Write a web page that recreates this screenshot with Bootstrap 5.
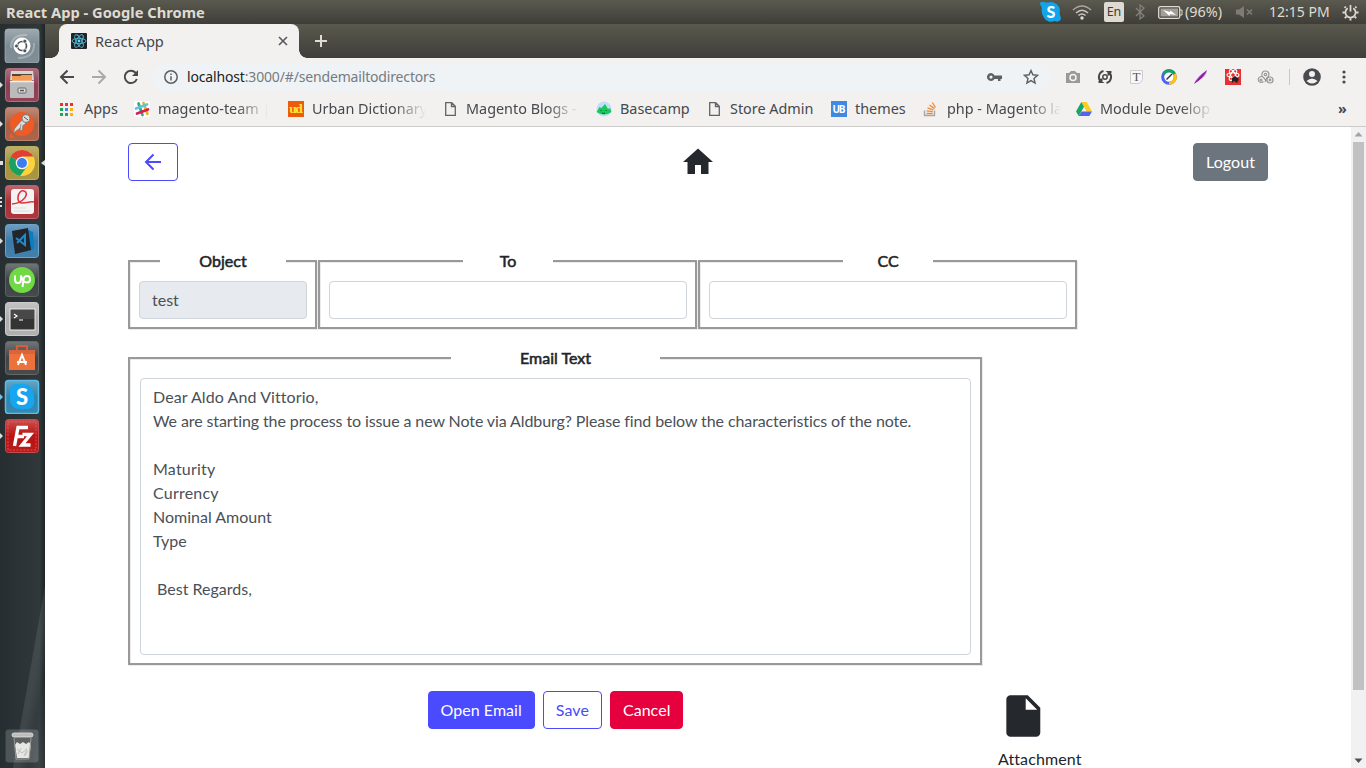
<!DOCTYPE html>
<html lang="en">
<head>
<meta charset="utf-8">
<meta name="viewport" content="width=device-width, initial-scale=1">
<title>React App</title>
<link href="https://cdn.jsdelivr.net/npm/bootstrap@5.3.0/dist/css/bootstrap.min.css" rel="stylesheet">
<script src="https://cdn.jsdelivr.net/npm/bootstrap@5.3.0/dist/js/bootstrap.bundle.min.js"></script>
<style>
body{height:768px;font-family:Lato,sans-serif;font-size:16px;color:#212529;line-height:24px}
svg{display:block;flex:none}
.ui{font-family:"Noto Sans","Open Sans",sans-serif;font-size:14px;letter-spacing:0;white-space:nowrap}
.panel{height:24px;background:linear-gradient(#5b5a50,#3e3d38);color:#dfdbd2;line-height:24px}
.panel b{font-size:14.7px;padding-left:6px}
.pct{font-size:14.4px}
.tabname{font-size:14.6px}
.url{letter-spacing:-.16px}
.indicators{display:grid;grid-template-columns:32px 32px 31px 23px 27px 51px 33px 73px 24px;align-items:center;height:24px}
.lang{width:20px;height:20px;background:#dfdbd2;color:#3c3b37;border-radius:2px;font-size:12.5px;line-height:20px;text-align:center}
.launcher{width:45px;background:linear-gradient(100deg,transparent 0 62%,#ffffff17 63% 68%,#ffffff05 80%,#ffffff14) 0 100%/45px 230px no-repeat,linear-gradient(90deg,#262e31,#30383b 88%,#1d2426)}
.browser{min-width:0}
.tabs{height:34px;background:linear-gradient(#5a594e,#3f3e39);padding-left:14px}
.tab-open{width:240px;background:#f2f1f0;border-radius:8px 8px 0 0;padding-left:12px;padding-right:11px;color:#45484c;position:relative}
.tab-open::before,.tab-open::after{content:"";position:absolute;bottom:0;width:8px;height:8px}
.tab-open::before{left:-8px;background:radial-gradient(circle at 0 0,transparent 7.5px,#f2f1f0 8px)}
.tab-open::after{right:-8px;background:radial-gradient(circle at 100% 0,transparent 7.5px,#f2f1f0 8px)}
.toolbar{height:36px;background:#f2f1f0;padding:2px 0 0 14px;gap:16px}
.omnibox{width:899px;height:28px;margin-left:-3px;margin-right:-16px;border-radius:14px;background:#eff3f6;padding-left:12px;color:#777b80;flex:none}
.omnibox span{color:#222}
.url{margin-left:9px}
.keyicon{margin-right:21px}.staricon{margin-right:12px}
.exts{display:grid;grid-template-columns:46px 32px 32px 32px 32px 32px 32px 14px 39px 8px;align-items:center}
.cam{margin-left:14px}
.bookmarks{height:33px;background:#f2f1f0;border-bottom:1px solid #cccbca;padding:0 0 2px 15px;display:grid;grid-template-columns:74px 154px 156px 152px 112px 123px 92px 153px 262px auto;align-items:center;color:#45484c;font-size:14.4px}
.bm{display:flex;align-items:center;height:30px}
.bm svg{width:16px;height:16px;margin-right:8px}
.bm .doc{margin-left:-2px}
.fade-end{-webkit-mask-image:linear-gradient(90deg,#000 calc(100% - 32px),transparent)}
.w107{width:110px}.w113{width:114px}.w111{width:113px}
.page{padding:16px 83px 0;background:#fff;overflow:hidden;min-width:0}
.page .btn{--bs-btn-padding-x:12px;--bs-btn-border-radius:4px;height:38px;letter-spacing:.05px}
.blue-outline{--bs-btn-color:#4a4aff;--bs-btn-border-color:#4a4aff}
.blue-fill{--bs-btn-color:#fff;--bs-btn-bg:#4a4aff;--bs-btn-border-color:#4a4aff}
.red-fill{--bs-btn-color:#fff;--bs-btn-bg:#e6003e;--bs-btn-border-color:#e6003e}
.backbtn{width:50px}
.home{margin-left:25px}
.group{border:2px solid #999;box-shadow:1px 1px #ebebeb,inset 1px 1px #ebebeb;margin-right:1px;padding:8px 8px 8px 9px}
.group legend{float:none;margin:0 auto;background:#fff;font-size:16px;line-height:24px;height:24px;padding:0;text-align:center;-webkit-text-stroke:.55px #212529}
.lg-a{width:126px}.lg-b{width:90px}.lg-c{width:209px}
.page .form-control{border-radius:4px;border-color:#ced4da;color:#495057;padding:6px 12px}
.page .form-control:disabled{background:#e7ebef}
.first-row{margin-top:68px}
.second-row{margin-top:17px}
.mail{padding-left:10px;padding-right:9px}
.mail .message{height:277px;white-space:pre}
.message div{height:24px}
.looser{letter-spacing:.09px}.wide{letter-spacing:.22px}.tight{letter-spacing:-.1px}
.actions{margin-top:26px}
.attach{padding-left:15px;height:425px}
.attach div{margin-top:6px;letter-spacing:.1px}
.scroller{width:15px;background:#f1f1f1;flex:none}
.thumb{width:11px;height:548px;background:#c1c1c1}
</style>
</head>
<body class="d-flex flex-column overflow-hidden">
<header class="panel ui d-flex justify-content-between">
  <b>React App - Google Chrome</b>
  <div class="indicators">
    <svg width="22" height="22" viewBox="0 0 22 22"><path d="M0 3Q0 0 4 1Q7 2 10 1Q18 1 20 9Q19 13 21 17Q20 22 15 20Q7 23 3 15Q1 11 2 7Z" fill="#11a5ea"/><text x="11" y="16.500" font-family="Lato" font-weight="900" font-size="16" fill="#fff" text-anchor="middle">S</text></svg>
    <svg width="20" height="16" viewBox="0 0 20 16" fill="none" stroke="#c9c6be" stroke-width="1.600"><path d="M1 6Q10-2 19 6" stroke="#aaa79f"/><path d="M4 9Q10 3.500 16 9M6.500 11.500Q10 8.500 13.500 11.500"/><circle cx="10" cy="14" r="1.700" fill="#dfdbd2" stroke="none"/></svg>
    <div class="lang">En</div>
    <svg width="11" height="16" viewBox="0 0 11 16" fill="none" stroke="#85837b" stroke-width="1.200"><path d="M1 4l8 8-4 3V1l4 3-8 8"/></svg>
    <svg width="25" height="13" viewBox="0 0 25 13"><rect x=".7" y=".7" width="21" height="11.600" rx="1.500" fill="none" stroke="#dfdbd2" stroke-width="1.300"/><rect x="2.500" y="2.500" width="17.500" height="8" fill="#a19f98"/><path d="M22 4h2v5h-2" fill="none" stroke="#dfdbd2"/><path d="M5 4l7 2 .5-1.500L18 9l-6-1-.5 2z" fill="#fff"/></svg>
    <span class="pct">(96%)</span>
    <svg width="18" height="14" viewBox="0 0 18 14"><path d="M0 4.500h3L8 1v12L3 9.500H0z" fill="#7d7b74"/><path d="M11 4.500l5 5m0-5l-5 5" stroke="#7d7b74" stroke-width="1.700"/></svg>
    <span class="clock">12:15 PM</span>
    <svg width="17" height="17" viewBox="0 0 18 18" fill="none" stroke="#dfdbd2"><path d="M6 4.500a5.400 5.400 0 1 0 6 0" stroke-width="1.800"/><path d="M9 1v7" stroke-width="1.800"/><path d="M4 4L2.700 2.700M14 4l1.300-1.300M3 9H.5m14.500 0h2.500M4.500 13.500L3 15m10.500-1.500L15 15M9 15v2.500" stroke-width="2"/></svg>
  </div>
</header>

<div class="d-flex flex-grow-1 overflow-hidden">
<aside class="launcher d-flex flex-column justify-content-between flex-shrink-0">
  <div>
  <svg width="45" height="39"><defs><linearGradient id="sh" x2="0" y2="1"><stop stop-color="#fff" stop-opacity=".3"/><stop offset=".5" stop-color="#fff" stop-opacity=".04"/><stop offset="1" stop-color="#fff" stop-opacity=".08"/></linearGradient></defs><rect x="5" y="5" width="34" height="34" rx="3" fill="#76868e"/><path d="M11 24Q11 10 27 11M34 19Q35 34 18 34" stroke="#9ba7ad" stroke-width="2" fill="none"/><rect x="5" y="5" width="34" height="34" rx="3" fill="url(#sh)" stroke="#aab2b6" stroke-width=".7"/><circle cx="22" cy="22" r="8.500" fill="#fff"/><circle cx="22" cy="22" r="4.500" fill="none" stroke="#4c555a" stroke-width="1.700"/><g fill="#4c555a" stroke="#fff" stroke-width=".8"><circle cx="16.500" cy="22" r="2"/><circle cx="24.800" cy="17.200" r="2"/><circle cx="24.800" cy="26.800" r="2"/></g></svg>
  <svg width="45" height="39"><rect x="5.500" y="5.500" width="33" height="33" rx="3" fill="#8a344a"/><rect x="5.500" y="5.500" width="33" height="33" rx="3" fill="url(#sh)" stroke="#ac7180"/><path d="M11 8h22l1 9H10z" fill="#d8d5d2"/><path d="M12 11h20v7H12z" fill="#564438"/><path d="M12 13h8l2-1h10v6H12z" fill="#f39a55"/><rect x="10" y="18" width="24" height="17" rx="1" fill="#bbb"/><path d="M10 18.500h24" stroke="#f4f4f4" stroke-width="1.500"/><rect x="18" y="25" width="8" height="5" rx="1" fill="#ddd" stroke="#666"/><path d="M20 27.500h4" stroke="#555" stroke-width="1.500"/><path d="M0 19l3 3-3 3z" fill="#ddd"/></svg>
  <svg width="45" height="39"><rect x="5.500" y="5.500" width="33" height="33" rx="3" fill="#a5593c"/><rect x="5.500" y="5.500" width="33" height="33" rx="3" fill="url(#sh)" stroke="#bd8069"/><circle cx="22" cy="22" r="12" fill="#f15a24"/><path d="M10 31l5 5h-5z" fill="#f15a24"/><path d="M13 31l2-5 8-9 3 4-7 6z" fill="#ddd" stroke="#777" stroke-width=".7"/><path d="M21 22l-1 6 2 1 1-6" fill="#ddd" stroke="#777" stroke-width=".7"/><circle cx="26" cy="16.500" r="4" fill="#ddd" stroke="#777"/><path d="M24 15l4 3" stroke="#555"/><path d="M0 19l3 3-3 3z" fill="#ddd"/></svg>
  <svg width="45" height="39"><rect x="5.500" y="5.500" width="33" height="33" rx="3" fill="#a38e33"/><rect x="5.500" y="5.500" width="33" height="33" rx="3" fill="url(#sh)" stroke="#bfae5a"/><circle cx="22" cy="22" r="13" fill="#fdd23c"/><path d="M22 22L10.700 15.500a13 13 0 0 1 22.600 0H22z" fill="#df3f34"/><path d="M22 22L10.700 15.500a13 13 0 0 0 9.300 19.400L27.500 25z" fill="#1ba15f"/><circle cx="22" cy="22" r="6.300" fill="#f4f4f4"/><circle cx="22" cy="22" r="5" fill="#3b7ded"/><path d="M0 20h3v4H0z" fill="#ddd"/><path d="M45 19l-4 3 4 3z" fill="#ddd"/></svg>
  <svg width="45" height="39"><rect x="5.500" y="5.500" width="33" height="33" rx="3" fill="#a5262e"/><rect x="5.500" y="5.500" width="33" height="33" rx="3" fill="url(#sh)" stroke="#c16067"/><rect x="11" y="9" width="23" height="25" rx="3" fill="#f3f3f3"/><path d="M12 24C24 23 30 13 24 11s-9 12-2 12 7-2 12-1" stroke="#df3541" stroke-width="1.600" fill="none"/><path d="M14 28h12m-12 3h16" stroke="#ddd"/><path d="M0 18h2m-2 4h2m-2 4h2" stroke="#ddd" stroke-width="2"/></svg>
  <svg width="45" height="39"><rect x="5.500" y="5.500" width="33" height="33" rx="3" fill="#3375a5"/><rect x="5.500" y="5.500" width="33" height="33" rx="3" fill="url(#sh)" stroke="#6ea4c9"/><path d="M28 11l5 2 1 17-9 3z" fill="#087dc7"/><path d="M12 12l16-3 3 22-16 4z" fill="#22252a"/><path d="M16 19l9 7V16l-8 8" fill="none" stroke="#2489ca" stroke-width="2"/><path d="M0 19l3 3-3 3z" fill="#ddd"/></svg>
  <svg width="45" height="39"><rect x="5.500" y="5.500" width="33" height="33" rx="3" fill="#353c3e"/><rect x="5.500" y="5.500" width="33" height="33" rx="3" fill="url(#sh)" stroke="#5b6061"/><circle cx="22" cy="22" r="13" fill="#6fda44"/><path d="M15 17.500v4q0 3.500 3 3.500t3-3.500v-4q2 7 6 7 3 0 3-3.300t-3-3.300q-3 0-3.500 4L22.500 29" fill="none" stroke="#fff" stroke-width="2"/></svg>
  <svg width="45" height="39"><rect x="5.500" y="5.500" width="33" height="33" rx="3" fill="#aaa"/><rect x="5.500" y="5.500" width="33" height="33" rx="3" fill="url(#sh)" stroke="#ccc"/><rect x="10" y="12" width="25" height="21" fill="#343434" stroke="#eee"/><path d="M11 13h23v9H11z" fill="#fff" opacity=".1"/><path d="M14 17l3 2-3 2m5 2h4" fill="none" stroke="#fff" stroke-width="1.200"/><path d="M0 19l3 3-3 3z" fill="#ddd"/></svg>
  <svg width="45" height="39"><rect x="5.500" y="5.500" width="33" height="33" rx="3" fill="#393b3c"/><rect x="5.500" y="5.500" width="33" height="33" rx="3" fill="url(#sh)" stroke="#666"/><path d="M9 14h26v20H9z" fill="#ee713b"/><path d="M9 14h26v4H9z" fill="#d9633a"/><path d="M17 14v-4h10v4" fill="none" stroke="#d95e38" stroke-width="2"/><path d="M18 29l4-10 4 10m-9-3h10" fill="none" stroke="#fff" stroke-width="2"/></svg>
  <svg width="45" height="39"><rect x="5.500" y="5.500" width="33" height="33" rx="3" fill="#277fab"/><rect x="5.500" y="5.500" width="33" height="33" rx="3" fill="url(#sh)" stroke="#5bbce7" stroke-width="1.500"/><path d="M10 16q0-8 8-7 15-2 16 13 2 13-9 12-15 2-15-11z" fill="#16a6ef"/><text x="22" y="29.500" font-family="Lato" font-weight="900" font-size="22" fill="#fff" text-anchor="middle">S</text><path d="M0 19l3 3-3 3z" fill="#71c3e4"/></svg>
  <svg width="45" height="39"><rect x="5.500" y="5.500" width="33" height="33" rx="3" fill="#b60808"/><rect x="5.500" y="5.500" width="33" height="33" rx="3" fill="url(#sh)" stroke="#c64b4b"/><rect x="8" y="8" width="28" height="28" fill="none" stroke="#e46a6a" stroke-width=".7" stroke-dasharray="2 1.500"/><path d="M14.500 32L18 13.500H28M16 22.500h8M22.500 20.500h8L22 31h8.500" fill="none" stroke="#fff" stroke-width="3.400"/><path d="M0 19l3 3-3 3z" fill="#ddd"/></svg>
  </div>
  <svg width="45" height="44"><rect x="5.500" y="5.500" width="33" height="33" rx="3" fill="#fff" fill-opacity=".18"/><path d="M14 13l2 22h13l2-22z" fill="#5d605f"/><path d="M15 21l2-3 3 2 3-2 3 2 3-2 2 3-2 13H17z" fill="#e6e6e2"/><path d="M17 25l5 4 5-4-3 7m-6-2l3-6m4 8l3-5" stroke="#b9b9b4" stroke-width=".8" fill="none"/><rect x="12" y="9" width="21" height="4" rx="2" fill="#bbbdba" stroke="#e2e2df" stroke-width=".8"/><path d="M14 14l2 21h13l2-21" fill="none" stroke="#999"/></svg>
</aside>

<div class="browser d-flex flex-column flex-grow-1">
  <div class="tabs ui d-flex">
    <div class="tab-open d-flex align-items-center">
      <svg width="16" height="16" viewBox="0 0 16 16"><rect width="16" height="16" rx="1" fill="#20232a"/><g fill="none" stroke="#53bbd5" stroke-width=".9"><ellipse cx="8" cy="8" rx="7" ry="2.700"/><ellipse cx="8" cy="8" rx="7" ry="2.700" transform="rotate(60 8 8)"/><ellipse cx="8" cy="8" rx="7" ry="2.700" transform="rotate(120 8 8)"/></g><circle cx="8" cy="8" r="1.400" fill="#61dafb"/></svg>
      <span class="ms-2 me-auto tabname">React App</span>
      <svg width="10" height="10" viewBox="0 0 10 10"><path d="M1 1l8 8m0-8L1 9" stroke="#55585c" stroke-width="1.600"/></svg>
    </div>
    <svg class="align-self-center ms-3" width="12" height="12"><path d="M6 0v12M0 6h12" stroke="#dedcd5" stroke-width="2"/></svg>
  </div>
  <div class="toolbar ui d-flex align-items-center">
    <svg width="16" height="16" viewBox="0 0 16 16" fill="none" stroke="#47494c" stroke-width="2"><path d="M15 8H2m6.500-6.500L2 8l6.500 6.500"/></svg>
    <svg width="16" height="16" viewBox="0 0 16 16" fill="none" stroke="#aaa" stroke-width="2"><path d="M1 8h13M7.500 1.500L14 8l-6.500 6.500"/></svg>
    <svg width="16" height="16" viewBox="0 0 16 16"><path d="M13.800 10A6.200 6.200 0 1 1 12.400 3.500L14 5" fill="none" stroke="#47494c" stroke-width="2"/><path d="M15 1v6H9z" fill="#47494c"/></svg>
    <div class="omnibox d-flex align-items-center">
      <svg width="14" height="14" viewBox="0 0 14 14" fill="none" stroke="#5c5f63" stroke-width="1.500"><circle cx="7" cy="7" r="6.200"/><path d="M7 6.200v4.300M7 3.500v1.500"/></svg>
      <div class="url me-auto"><span>localhost</span>:3000/#/sendemailtodirectors</div>
      <svg class="keyicon" width="15" height="10" viewBox="0 0 15 10"><path d="M4 1a4 4 0 1 0 3.500 6H11v2h2.500V7H15V3.500H7.500A4 4 0 0 0 4 1zm0 2.500a1.600 1.600 0 1 1 0 3.200 1.600 1.600 0 0 1 0-3.200z" fill="#5c5f63" fill-rule="evenodd"/></svg>
      <svg class="staricon" width="16" height="16" viewBox="0 0 16 16"><path d="M8 1.500l1.900 4.300 4.700.5L11 9.400l1.100 4.700L8 11.600l-4.100 2.500L5 9.400 1.400 6.300l4.700-.5z" fill="none" stroke="#5c5f63" stroke-width="1.400"/></svg>
    </div>
    <div class="exts">
      <svg class="cam" width="16" height="16" viewBox="0 0 16 16"><path d="M1 4h3l2-2h4l2 2h3v10H1z" fill="#999"/><circle cx="8" cy="8.500" r="3" fill="#999" stroke="#f4f4f4" stroke-width="1.500"/></svg>
      <svg width="16" height="16" viewBox="0 0 16 16" fill="none" stroke="#474747" stroke-width="2"><path d="M6.500 2a6.200 6.200 0 0 0-2 11H1.500M9.500 14a6.200 6.200 0 0 0 2-11h3M4.500 14V9.500M11.500 2v4.500"/><circle cx="8" cy="8" r="2.200" stroke-width="1.500"/></svg>
      <svg width="16" height="16"><path d="M1.500 1.500h12v9l-3 4h-9z" fill="#f8f8f8" stroke="#ccc"/><text x="7.500" y="12" font-size="13" font-family="Liberation Serif" text-anchor="middle" fill="#555">T</text></svg>
      <svg width="16" height="16" viewBox="0 0 16 16"><circle cx="8" cy="8" r="6.300" fill="#fff" stroke="#4b62f6" stroke-width="3"/><path d="M2.500 5A6.300 6.300 0 0 1 13.500 5" fill="none" stroke="#12a45a" stroke-width="3"/><path d="M13.500 5A6.300 6.300 0 0 1 8 14.300" fill="none" stroke="#ffc20e" stroke-width="3"/><path d="M5.500 10.500L11 5" stroke="#333" stroke-width="1.500"/></svg>
      <svg width="16" height="16"><path d="M1 15Q3 8 14 1q0 7-9 10z" fill="#c6a3da"/><path d="M1 15Q5 8 14 1 11 9 1 15" fill="#8f1ba7"/></svg>
      <svg width="16" height="16"><path d="M0 0h16v16H0z" fill="#e53131"/><g fill="none" stroke="#fff" stroke-width="1.100"><ellipse cx="8" cy="6" rx="6" ry="2.300"/><ellipse cx="8" cy="6" rx="6" ry="2.300" transform="rotate(60 8 6)"/><ellipse cx="8" cy="6" rx="6" ry="2.300" transform="rotate(120 8 6)"/></g><path d="M7 9l3-2 4 3-2 4-3-2-2 2z" fill="#282020"/></svg>
      <svg width="17" height="16" viewBox="0 0 17 16" fill="none" stroke="#999" stroke-width="1.200"><path d="M5 8V5.500a3.500 3.500 0 0 1 7 0q0 2-2 3L8 13"/><circle cx="8.500" cy="5.500" r="1.200"/><path d="M6.500 12.500a3 3 0 1 1 0-4l3 3.500"/><circle cx="4" cy="11" r="1"/><circle cx="13" cy="11" r="3"/><circle cx="13" cy="11" r=".8"/></svg>
      <svg width="1" height="16"><path d="M.5 0v16" stroke="#c9c8c7"/></svg>
      <svg width="18" height="18" viewBox="0 0 18 18"><circle cx="9" cy="9" r="8.800" fill="#494b4e"/><circle cx="9" cy="6" r="3" fill="#f2f1f0"/><path d="M3.500 13q5.500-5 11 0-5.500 5-11 0" fill="#f2f1f0"/></svg>
      <svg width="4" height="16" fill="#47494c"><circle cx="2" cy="3" r="1.600"/><circle cx="2" cy="8" r="1.600"/><circle cx="2" cy="13" r="1.600"/></svg>
    </div>
  </div>
  <nav class="bookmarks ui">
    <div class="bm"><svg viewBox="0 0 16 16"><path d="M0 2h3v3H0zM5 2h3v3H5zM10 2h3v3h-3z" fill="#ed3324"/><path d="M0 7h3v3H0zM0 12h3v3H0zM5 12h3v3H5z" fill="#20a558"/><path d="M5 7h3v3H5z" fill="#4285f4"/><path d="M10 7h3v3h-3zM10 12h3v3h-3z" fill="#fbb018"/></svg><span>Apps</span></div>
    <div class="bm"><svg viewBox="0 0 16 16"><rect width="16" height="16" rx="2" fill="#fff"/><g stroke-width="2.700" stroke-linecap="round"><path d="M4.500 2.500l4 11.500" stroke="#2aa98c"/><path d="M9.500 2l4 11" stroke="#e6b225"/><path d="M2 7.500l11-4" stroke="#61c3d8"/><path d="M3 12.500l11-4" stroke="#df1a4d"/></g></svg><span class="fade-end w107">magento-team |</span></div>
    <div class="bm"><svg viewBox="0 0 16 16"><path d="M0 0h16v16H0z" fill="#ef5b0c"/><text x="8" y="12" font-size="11" font-family="DejaVu Serif" font-weight="bold" text-anchor="middle" fill="#fee531" textLength="14">ud</text></svg><span class="fade-end w113">Urban Dictionary</span></div>
    <div class="bm"><svg viewBox="0 0 16 16"><path d="M1.700 1.700h6l3.600 3.600v9H1.700zM7.500 2v3.500H11" fill="none" stroke="#606367" stroke-width="1.300"/></svg><span class="fade-end w111 doc">Magento Blogs -</span></div>
    <div class="bm"><svg viewBox="0 0 16 16"><circle cx="8" cy="8" r="7.500" fill="#c3dcf8"/><path d="M.5 11l3-5 2 1L9 3l3 5 2-1 1.500 4q-7 5-15 0" fill="#10cc5b"/><path d="M5 9v1m5-1v1M6 12q1.500 1 3 0" stroke="#174f2b" fill="none"/></svg><span>Basecamp</span></div>
    <div class="bm"><svg viewBox="0 0 16 16"><path d="M1.700 1.700h6l3.600 3.600v9H1.700zM7.500 2v3.500H11" fill="none" stroke="#606367" stroke-width="1.300"/></svg><span class="doc">Store Admin</span></div>
    <div class="bm"><svg viewBox="0 0 16 16"><path d="M0 0h16v16H0z" fill="#4089e2"/><text x="8" y="11.800" font-size="10" font-family="Open Sans" font-weight="bold" text-anchor="middle" fill="#fff" textLength="13">UB</text></svg><span>themes</span></div>
    <div class="bm"><svg viewBox="0 0 16 16" fill="none"><path d="M1.500 9.500v5h10v-5" stroke="#a5a7a9" stroke-width="1.400"/><path d="M3.500 12.500h6.200M3.600 9.800l6.200.8M4.500 6.800l5.900 2M6.500 4l5 3.600M9.300 1.500l3.200 5" stroke="#f18832" stroke-width="1.300"/></svg><span class="fade-end w113">php - Magento la</span></div>
    <div class="bm"><svg viewBox="0 0 16 16"><path d="M5.300 1h5.400L16 10.500h-5.300z" fill="#fccd25"/><path d="M5.300 1L0 10.500 2.700 15 8 5.700z" fill="#16a765"/><path d="M5.500 10.500H16L13.300 15H2.700z" fill="#5463ed"/></svg><span class="fade-end w111">Module Develop</span></div>
    <b class="more">»</b>
  </nav>

  <div class="d-flex flex-grow-1 overflow-hidden">
    <main class="page flex-grow-1">
      <div class="d-flex justify-content-between align-items-center">
        <button class="btn blue-outline backbtn" aria-label="Back"><svg width="24" height="24" viewBox="0 0 24 24"><path d="M20 12H5m7.500-7.500L5 12l7.500 7.500" fill="none" stroke="currentColor" stroke-width="2"/></svg></button>
        <svg class="home" width="36" height="36" viewBox="0 0 24 24" fill="#25292e"><path d="M10 20v-6h4v6h5v-8h3L12 3 2 12h3v8z"/></svg>
        <button class="btn btn-secondary">Logout</button>
      </div>
      <div class="row g-0 first-row">
        <div class="col-2"><fieldset class="group"><legend class="lg-a">Object</legend><input class="form-control" value="test" disabled></fieldset></div>
        <div class="col-4"><fieldset class="group"><legend class="lg-b">To</legend><input class="form-control"></fieldset></div>
        <div class="col-4"><fieldset class="group"><legend class="lg-b">CC</legend><input class="form-control"></fieldset></div>
      </div>
      <div class="row g-0 second-row">
        <div class="col-9">
          <fieldset class="group mail"><legend class="lg-c">Email Text</legend>
            <div class="form-control message" contenteditable="true" spellcheck="false"><div class="looser">Dear Aldo And Vittorio,</div><div class="tight">We are starting the process to issue a new Note via Aldburg? Please find below the characteristics of the note.</div><div></div><div class="wide">Maturity</div><div class="wide">Currency</div><div>Nominal Amount</div><div>Type</div><div></div><div> Best Regards,</div></div>
          </fieldset>
          <div class="d-flex justify-content-center gap-2 actions">
            <button class="btn blue-fill">Open Email</button><button class="btn blue-outline">Save</button><button class="btn red-fill">Cancel</button>
          </div>
        </div>
        <div class="col-3 d-flex flex-column justify-content-end attach">
          <svg width="50" height="50" viewBox="0 0 24 24" fill="#25292e"><path fill-rule="evenodd" d="M6 2a2 2 0 0 0-2 2v16a2 2 0 0 0 2 2h12.300a2 2 0 0 0 2-2V8l-6-6zM13.300 9V3.500L18.800 9z"/></svg>
          <div>Attachment</div>
        </div>
      </div>
    </main>
    <div class="scroller d-flex flex-column align-items-center justify-content-between">
      <svg width="15" height="15"><path d="M3.500 9.500L7.500 5l4 4.500z" fill="#a3a3a3"/></svg>
      <div class="thumb mb-auto"></div>
      <svg width="15" height="15"><path d="M3.500 5.500l4 4.500 4-4.500z" fill="#505050"/></svg>
    </div>
  </div>
</div>
</div>
</body>
</html>
